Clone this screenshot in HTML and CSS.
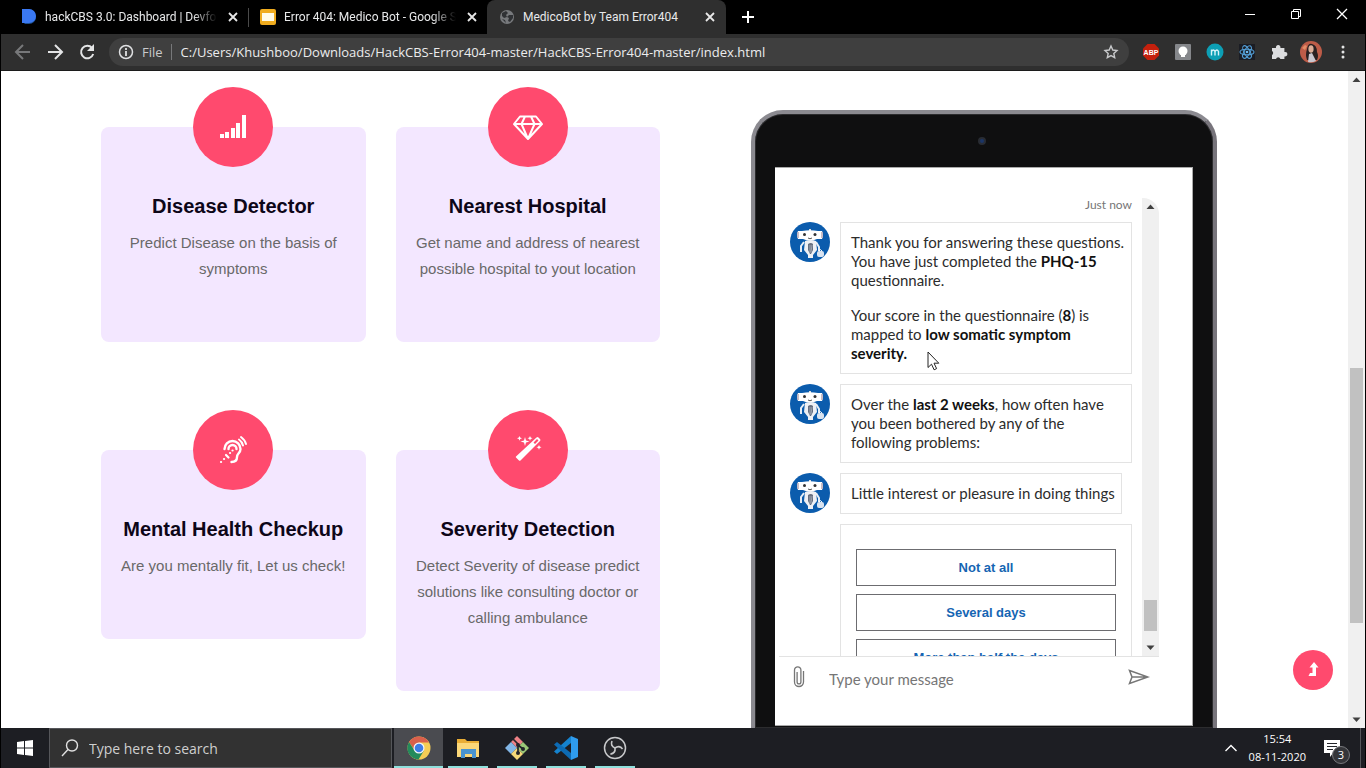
FILE: index.html
```html
<!DOCTYPE html>
<html lang="en">
<head>
<meta charset="utf-8">
<title>MedicoBot by Team Error404</title>
<link rel="stylesheet" href="styles.css">
</head>
<body>
<svg class="defs" width="0" height="0" aria-hidden="true">
  <symbol id="close" viewBox="0 0 16 16"><path d="M4 4l8 8M12 4l-8 8" stroke="#e8e8e8" stroke-width="1.800"/></symbol>
  <symbol id="bot" viewBox="0 0 40 40">
    <circle cx="20" cy="20" r="20" fill="#0b5cad"/>
    <path d="M19 7h2v3h-2z" fill="#ddd"/>
    <path d="M12 9q8-1.500 16 0l4 0q2 4 0 8l-5 0q-7 3-14 0l-5 0q-2-4 0-8z" fill="#fff"/>
    <circle cx="14.500" cy="12.500" r="1.500" fill="#333"/><circle cx="25" cy="12.500" r="1.500" fill="#333"/>
    <path d="M18 16q2 1.500 4 0" stroke="#555" fill="none"/>
    <path d="M8 10v6M32 10v6" stroke="#b9a9b5" stroke-width="1.500"/>
    <path d="M14 20l-3 4v6M26 20l3 5v4" stroke="#e6edf5" stroke-width="2" fill="none"/>
    <path d="M15 19q6-2 11 0l1 9-4 5v3h-5v-3l-4-5z" fill="#eef0f4"/>
    <path d="M18 22q3-2 5 0v6l-2 4h-1l-2-4z" fill="#666f80"/>
    <path d="M20 23v8M22 23l-1 7" stroke="#bcc3cf" stroke-width=".6"/>
    <rect x="27" y="29" width="7" height="6" rx="2" fill="#d9e3f0"/><path d="M29 29q1-3 3 0" fill="none" stroke="#fff"/>
  </symbol>
</svg>

<header class="titlebar">
  <div class="tab">
    <svg width="16" height="16"><path d="M1 0h7a8 8 0 0 1 7 8a7 7 0 0 1-7 7H4l-3-3z" fill="#1d4f8f"/><path d="M1 0h7a7 7 0 0 1 0 14H1z" fill="#3a78f2"/></svg>
    <span class="tab-title fade">hackCBS 3.0: Dashboard | Devfolio</span>
    <button class="plain" aria-label="Close tab"><svg width="16" height="16"><use href="#close"/></svg></button>
  </div>
  <div class="tab divided">
    <svg width="16" height="16"><rect width="16" height="16" rx="2" fill="#f0ac1e"/><rect x="2" y="4" width="12" height="8" fill="#fffbe8"/></svg>
    <span class="tab-title fade">Error 404: Medico Bot - Google Slides</span>
    <button class="plain" aria-label="Close tab"><svg width="16" height="16"><use href="#close"/></svg></button>
  </div>
  <div class="tab active">
    <svg width="16" height="16"><circle cx="8" cy="8" r="7" fill="#77797c"/><path d="M3 4l4-2 2 2-2 2 1 2-3 1-2-2zM10 6l4 0v3l-3 4-2-1 1-3-2-1zM3 10l3 1 1 3z" fill="#303235"/></svg>
    <span class="tab-title">MedicoBot by Team Error404</span>
    <button class="plain" aria-label="Close tab"><svg width="16" height="16"><use href="#close"/></svg></button>
  </div>
  <button class="plain new-tab" aria-label="New tab"><svg width="16" height="16"><path d="M8 2v12M2 8h12" stroke="#fff" stroke-width="2"/></svg></button>
  <div class="window-controls">
    <button class="plain" aria-label="Minimize"><svg width="12" height="12"><path d="M1 6.500h10" stroke="#fff"/></svg></button>
    <button class="plain" aria-label="Restore"><svg width="12" height="12" fill="none" stroke="#fff"><path d="M1.500 3.500h7v7h-7zM3.500 3.500v-2h7v7h-2"/></svg></button>
    <button class="plain" aria-label="Close"><svg width="12" height="12"><path d="M1 1l10 10M11 1L1 11" stroke="#fff" stroke-width="1.300"/></svg></button>
  </div>
</header>

<nav class="toolbar" aria-label="Browser">
  <button class="plain nav-btn" aria-label="Back"><svg width="18" height="18" fill="none" stroke="#77787a" stroke-width="2"><path d="M16 9H3M9 2L2 9l7 7"/></svg></button>
  <button class="plain nav-btn" aria-label="Forward"><svg width="18" height="18" fill="none" stroke="#e4e5e6" stroke-width="2"><path d="M2 9h13M9 2l7 7-7 7"/></svg></button>
  <button class="plain nav-btn" aria-label="Reload"><svg width="18" height="18"><path d="M14 5a6.200 6.200 0 1 0 1.200 6" fill="none" stroke="#e4e5e6" stroke-width="2"/><path d="M16 1v7H9z" fill="#e4e5e6"/></svg></button>
  <div class="omnibox">
    <svg width="16" height="16"><circle cx="8" cy="8" r="6.500" fill="none" stroke="#dfe0e2" stroke-width="1.500"/><path d="M8 7v5M8 4v2" stroke="#dfe0e2" stroke-width="1.800"/></svg>
    <label for="url">File</label>
    <input id="url" type="text" value="C:/Users/Khushboo/Downloads/HackCBS-Error404-master/HackCBS-Error404-master/index.html">
    <button class="plain" aria-label="Bookmark"><svg width="16" height="16"><path d="M8 2l1.800 4 4.200.5-3.200 2.900.9 4.300L8 11.600l-3.700 2.100.9-4.300L2 6.500 6.200 6z" fill="none" stroke="#c8c9cb" stroke-width="1.400"/></svg></button>
  </div>
  <button class="plain ext" aria-label="Adblock Plus"><svg width="18" height="18"><path d="M5.500 1h7L17 5.500v7L12.500 17h-7L1 12.500v-7z" fill="#c4200d"/><text x="9" y="12" text-anchor="middle" class="abp">ABP</text></svg></button>
  <button class="plain ext" aria-label="Notes"><svg width="18" height="18"><rect x="1" y="1" width="16" height="16" rx="1" fill="#85878b"/><circle cx="9" cy="8" r="4.500" fill="#fff"/><path d="M7 11h4v3H7z" fill="#fff"/></svg></button>
  <button class="plain ext" aria-label="M extension"><svg width="18" height="18"><circle cx="9" cy="9" r="8.500" fill="#0d9fb5"/><path d="M5.500 12.500v-6M5.500 8.500q2-3 3.500 0v4M9 8.500q2-3 3.500 0v4" fill="none" stroke="#d8f4fa" stroke-width="1.400"/></svg></button>
  <button class="plain ext" aria-label="React tools"><svg width="18" height="18"><rect x="1" y="1" width="16" height="16" fill="#1b1d24"/><g fill="none" stroke="#539fd6" stroke-width="1.100"><ellipse cx="9" cy="9" rx="7" ry="2.800"/><ellipse cx="9" cy="9" rx="7" ry="2.800" transform="rotate(60 9 9)"/><ellipse cx="9" cy="9" rx="7" ry="2.800" transform="rotate(120 9 9)"/></g><circle cx="9" cy="9" r="1.300" fill="#6cb8ee"/></svg></button>
  <button class="plain ext" aria-label="Extensions"><svg width="18" height="18"><path d="M2 5h4a2.300 2.300 0 1 1 4.400 0h4v4a2.300 2.300 0 1 1 0 4.400V16h-4a2.300 2.300 0 0 0-4.400 0H2v-4a2.300 2.300 0 0 0 0-4z" fill="#dcdddf"/></svg></button>
  <button class="plain ext" aria-label="Profile"><svg width="22" height="22"><circle cx="11" cy="11" r="11" fill="#bd5c48"/><path d="M7 19q-2-5 0-11 1-6 5-5 5 1 5 8 2 4 0 8z" fill="#292021"/><ellipse cx="11" cy="8" rx="2.600" ry="3.800" fill="#dcae98"/><path d="M8 21l1-8 3-1 4 8q-4 2-8 1z" fill="#c9c7cf"/><path d="M2 7l3-3 2 1-2 4z" fill="#e38c66"/></svg></button>
  <button class="plain ext" aria-label="Menu"><svg width="18" height="18" fill="#e4e5e6"><circle cx="9" cy="4" r="1.500"/><circle cx="9" cy="9" r="1.500"/><circle cx="9" cy="14" r="1.500"/></svg></button>
</nav>

<div class="viewport">
  <main class="page">
    <section class="features">
      <article class="card">
        <span class="card-icon"><svg width="40" height="40" fill="#fff"><path d="M7 27h4v4H7zM12 25h4v6h-4zM18 21h4v10h-4zM23 16h4v15h-4zM29 8h4v23h-4z"/></svg></span>
        <h3>Disease Detector</h3>
        <p>Predict Disease on the basis of symptoms</p>
      </article>
      <article class="card">
        <span class="card-icon"><svg width="40" height="40" fill="none" stroke="#fff" stroke-width="2" stroke-linejoin="round"><path d="M12 9.500h16l6 7.500L20 32 6 17zM6 17h28M17 9.500l-3.500 7.500L20 32l6.500-15L23 9.500"/></svg></span>
        <h3>Nearest Hospital</h3>
        <p>Get name and address of nearest possible hospital to yout location</p>
      </article>
      <article class="card">
        <span class="card-icon"><svg width="40" height="40" fill="none" stroke="#fff" stroke-linecap="round" stroke-width="2.400"><path d="M11.500 19a8 8 0 0 1 16 0c0 4-3.500 4.500-3.500 8s-2.500 5-5.500 5M15.500 19a4 4 0 0 1 8 0"/><path d="M26 9.500q3 2 4 6M28 7q4 3 5 7" stroke-width="2"/><path d="M8 32h.1M11 29h.1M19.500 20.500h.1M17 23h.1M13 25l2.500 2.500" stroke-width="2.200"/></svg></span>
        <h3>Mental Health Checkup</h3>
        <p>Are you mentally fit, Let us check!</p>
      </article>
      <article class="card">
        <span class="card-icon"><svg width="40" height="40" fill="#fff"><path fill-rule="evenodd" d="M8 26.500L28.500 7.500q1-1 2 0l1.500 1.500q1 1 0 2L12.500 30.500q-1 .5-1.500 0L8 27.500q-.5-.5 0-1zM25.500 12.500l1.500 1.500 3.500-3.500L29 9z"/><path d="M17 7l1 3.500 3.500 1-3.500 1-1 3.500-1-3.500-3.500-1 3.500-1zM11.500 6l.7 1.600 1.800.7-1.800.7-.7 1.700-.7-1.700L9 8.300l1.800-.7zM22 6l.7 1.600 1.800.7-1.800.7-.7 1.700-.7-1.700-1.800-.7 1.800-.7zM31 15l.7 1.600 1.800.7-1.800.7-.7 1.700-.7-1.700-1.800-.7 1.800-.7z"/></svg></span>
        <h3>Severity Detection</h3>
        <p>Detect Severity of disease predict solutions like consulting doctor or calling ambulance</p>
      </article>
    </section>

    <section class="tablet">
      <div class="camera-row"><span class="camera"></span></div>
      <div class="screen">
        <div class="chat">
          <div class="transcript">
            <div class="messages">
              <p class="stamp">Just now</p>
              <div class="message">
                <svg class="avatar"><use href="#bot"/></svg>
                <div class="bubble">
                  <p>Thank you for answering these questions. You have just completed the <b>PHQ-15</b> questionnaire.</p>
                  <p>Your score in the questionnaire (<b>8</b>) is mapped to <b>low somatic symptom severity.</b></p>
                  <svg class="cursor" width="14" height="20"><path d="M1 1v15.500l3.500-3.300 2.600 5.600 2.500-1.200L7 12.200h4.800z" fill="#fff" stroke="#222"/></svg>
                </div>
              </div>
              <div class="message">
                <svg class="avatar"><use href="#bot"/></svg>
                <div class="bubble"><p>Over the <b>last 2 weeks</b>, how often have you been bothered by any of the following problems:</p></div>
              </div>
              <div class="message">
                <svg class="avatar"><use href="#bot"/></svg>
                <div class="bubble fit"><p>Little interest or pleasure in doing things</p></div>
              </div>
              <div class="message">
                <span class="avatar"></span>
                <div class="bubble choices">
                  <button>Not at all</button>
                  <button>Several days</button>
                  <button>More than half the days</button>
                </div>
              </div>
            </div>
            <div class="scrollbar chat-scroll">
              <svg class="arrow" viewBox="0 0 17 17"><path d="M4.500 11h8l-4-4.500z"/></svg>
              <span class="before"></span><span class="thumb"></span><span class="after"></span>
              <svg class="arrow" viewBox="0 0 17 17"><path d="M4.500 6.500h8l-4 4.500z"/></svg>
            </div>
          </div>
          <form class="composer">
            <button type="button" class="plain" aria-label="Attach"><svg width="16" height="24" fill="none" stroke="#767676" stroke-width="1.300"><path d="M12.500 6v11a4.500 4.500 0 0 1-9 0V5a3.200 3.200 0 0 1 6.400 0v12a1.900 1.900 0 0 1-3.800 0V7"/></svg></button>
            <input type="text" placeholder="Type your message" aria-label="Type your message">
            <button type="button" class="plain" aria-label="Send"><svg width="22" height="16" fill="none" stroke="#767676" stroke-width="1.500"><path d="M1.500 1.500L20 8 1.500 14.500 4 8zM4 8h16"/></svg></button>
          </form>
        </div>
      </div>
    </section>
  </main>
  <button class="to-top" aria-label="Back to top"><svg width="20" height="20"><path d="M11 2l4.500 5.500H13V16H5.500l1.500-3h2.500V7.500H6.500z" fill="#fff"/></svg></button>
  <div class="scrollbar page-scroll">
    <svg class="arrow" viewBox="0 0 17 17"><path d="M4.500 11h8l-4-4.500z"/></svg>
    <span class="before"></span><span class="thumb"></span><span class="after"></span>
    <svg class="arrow" viewBox="0 0 17 17"><path d="M4.500 6.500h8l-4 4.500z"/></svg>
  </div>
</div>

<footer class="taskbar">
  <button class="plain start" aria-label="Start"><svg width="16" height="16" fill="#fff"><path d="M0 2l7-1v6.500H0zM8 1l8-1v7.500H8zM0 8.500h7V15l-7-1zM8 8.500h8V16l-8-1z"/></svg></button>
  <div class="search">
    <svg width="18" height="18" fill="none" stroke="#e0e0e0" stroke-width="1.400"><circle cx="11" cy="6.500" r="5.500"/><path d="M7 10.500L1 17"/></svg>
    <input type="text" placeholder="Type here to search" aria-label="Type here to search">
  </div>
  <div class="apps">
    <button class="plain app current" aria-label="Chrome"><svg width="24" height="24"><circle cx="12" cy="12" r="11.500" fill="#f4cd55"/><path d="M2 6a11.500 11.500 0 0 1 20 0.500H12L7.500 14z" fill="#d9604c"/><path d="M2 6a11.500 11.500 0 0 0 9.500 17.500L17 14.500l-9.500 0z" fill="#248a5c"/><circle cx="12" cy="12" r="5.500" fill="#f4f6fa"/><circle cx="12" cy="12" r="4.300" fill="#3e7de8"/></svg></button>
    <button class="plain app" aria-label="File Explorer"><svg width="24" height="24"><path d="M1 3h8l2 2h12v16H1z" fill="#e9ad35"/><path d="M1 7h22v14H1z" fill="#fbd779"/><path d="M5 13h15v9h-4v-4H9v4H5z" fill="#4993cf"/></svg></button>
    <button class="plain app" aria-label="Git Bash"><svg width="24" height="24"><path d="M12 0l6 6-6 6-6-6z" fill="#ee8186"/><path d="M6 6l6 6-6 6-6-6z" fill="#82b6e6"/><path d="M18 6l6 6-6 6-6-6z" fill="#9bc777"/><path d="M12 12l6 6-6 6-6-6z" fill="#f5d878"/><path d="M8 3l5 5v9M13 9l5 4" fill="none" stroke="#23252a" stroke-width="1.700"/><circle cx="13" cy="9" r="2" fill="#23252a"/><circle cx="13" cy="17" r="2" fill="#23252a"/><circle cx="18" cy="13" r="2" fill="#23252a"/></svg></button>
    <button class="plain app" aria-label="Visual Studio Code"><svg width="24" height="24"><path d="M17 0l7 3v18l-7 3z" fill="#2f9ced"/><path d="M17 0v7L3 18l-3-2.500z" fill="#1583cf"/><path d="M17 24v-7L3 6 0 8.500z" fill="#0d6bb4"/></svg></button>
    <button class="plain app" aria-label="OBS"><svg width="24" height="24" fill="none" stroke="#c8c9cb"><circle cx="12" cy="12" r="10.500" stroke-width="1.500" fill="#25262a"/><g stroke-width="1.600"><path d="M12 12q-5-2-3-7"/><path d="M12 12q-5-2-3-7" transform="rotate(120 12 12)"/><path d="M12 12q-5-2-3-7" transform="rotate(240 12 12)"/></g></svg></button>
  </div>
  <div class="tray">
    <button class="plain" aria-label="Hidden icons"><svg width="14" height="10"><path d="M1.500 8L7 2.500 12.500 8" fill="none" stroke="#fff" stroke-width="1.400"/></svg></button>
    <div class="clock"><span>15:54</span><span>08-11-2020</span></div>
    <button class="plain notices" aria-label="3 notifications"><svg width="16" height="17"><path d="M0 0h16v13H9l-3 4v-4H0z" fill="#fff"/><path d="M3 3.500h10M3 6.500h10M3 9.500h6" stroke="#25262b"/></svg><span class="badge">3</span></button>
  </div>
</footer>
</body>
</html>
```

FILE: styles.css
```css
* { box-sizing: border-box; }

body {
  margin: 0;
  height: 100vh;
  display: flex;
  flex-direction: column;
  overflow: hidden;
  background: #fff;
  border: solid #000;
  border-width: 0 1px;
  font-family: "Liberation Sans", Arial, sans-serif;
}

svg { display: block; flex: none; }
.defs { position: absolute; }
p, h3 { margin: 0; }
input, button { font: inherit; }

.plain {
  border: 0;
  padding: 0;
  background: none;
  color: inherit;
  display: flex;
  align-items: center;
  justify-content: center;
  flex: none;
}

/* Browser chrome */
.titlebar {
  flex: none;
  height: 34px;
  padding-left: 8px;
  display: flex;
  align-items: stretch;
  background: #000;
  color: #e8e9ea;
  font-family: Roboto, sans-serif;
  font-size: 12px;
}

.tab {
  width: 239px;
  padding: 0 7px 0 12px;
  display: flex;
  align-items: center;
  gap: 8px;
}
.divided { background: linear-gradient(#4a4a4a, #4a4a4a) 0 8px / 1px 19px no-repeat; }
.active { padding-right: 8px; background: #2f2f2f; border-radius: 8px 8px 0 0; }
.tab-title { flex: 1; min-width: 0; overflow: hidden; white-space: nowrap; }
.fade { mask-image: linear-gradient(to right, #000 86%, transparent); }
.new-tab { width: 44px; }
.window-controls { margin-left: auto; padding-bottom: 6px; display: flex; }
.window-controls .plain { width: 46px; }

.toolbar {
  flex: none;
  height: 37px;
  padding: 0 6px;
  display: flex;
  align-items: center;
  background: #2f2f2f;
  border-bottom: 1px solid #1c1c1c;
  font-family: "Open Sans", sans-serif;
  font-size: 13px;
}
.nav-btn, .ext { width: 32px; height: 28px; }
.omnibox {
  flex: 1;
  min-width: 0;
  height: 28px;
  margin: 0 6px;
  padding: 0 10px 0 9px;
  display: flex;
  align-items: center;
  gap: 8px;
  border-radius: 14px;
  background: #3f3f3f;
  color: #c9cacc;
}
.omnibox input {
  flex: 1;
  min-width: 0;
  height: 16px;
  padding: 0 0 0 9px;
  border: 0;
  border-left: 1px solid #77787a;
  background: none;
  color: #ececed;
}
.abp { font: bold 7px "Liberation Sans", sans-serif; fill: #fff; }

/* Web page */
.viewport { flex: 1; min-height: 0; display: flex; position: relative; }
.page {
  flex: 1;
  min-width: 0;
  overflow: hidden;
  padding: 0 131px 0 100px;
  display: grid;
  grid-template-columns: 559fr 466fr;
  grid-template-rows: 100%;
  gap: 91px;
}
.features {
  padding-top: 56px;
  display: grid;
  grid-template-columns: 1fr 1fr;
  align-content: start;
  align-items: start;
  gap: 108px 30px;
}
.card {
  padding: 0 15px 60px;
  display: flex;
  flex-direction: column;
  align-items: center;
  border-radius: 8px;
  background: #f3e7ff;
  text-align: center;
}
.card-icon {
  width: 80px;
  height: 80px;
  margin-top: -40px;
  display: grid;
  place-items: center;
  border-radius: 50%;
  background: #ff4a6e;
}
.card h3 { margin: 27px 0 12px; color: #0d0618; font-size: 20px; line-height: 24px; }
.card p { color: #696969; font-size: 15px; line-height: 26px; }

.tablet {
  min-width: 0;
  margin-top: 39px;
  padding: 0 20px 2px;
  display: flex;
  flex-direction: column;
  border: 4px solid #8b8a90;
  border-right-color: #77747b;
  border-bottom: 0;
  border-radius: 32px 32px 0 0;
  background: #0f0f10;
  box-shadow: inset 0 0 0 1px #2c2c2e;
}
.camera-row { flex: none; height: 53px; padding-right: 5px; display: grid; place-items: center; }
.camera { width: 8px; height: 8px; border-radius: 50%; border: 2px solid #292c33; background: #1b3568; }
.screen {
  flex: 1;
  min-height: 0;
  padding: 30px 33px 28px 4px;
  border: 1px solid #aaa;
  border-width: 1px 1px 1px 0;
  background: #fff;
}
.chat { height: 100%; display: flex; flex-direction: column; font-family: Lato, sans-serif; }
.transcript { flex: 1; min-height: 0; display: flex; overflow: hidden; border-bottom: 1px solid #e3e3e3; }
.messages {
  flex: 1;
  min-width: 0;
  padding: 0 10px 0 11px;
  display: flex;
  flex-direction: column;
  gap: 10px;
  color: #2c2c2c;
  font-size: 15px;
  line-height: 19px;
}
.stamp { color: #767676; font-size: 12px; line-height: 14px; text-align: right; }
.message { display: flex; align-items: flex-start; gap: 10px; }
.avatar { width: 40px; height: 40px; flex: none; }
.bubble { position: relative; flex: 1; padding: 10px 6px 10px 10px; border: 1px solid #e3e3e3; }
.bubble p + p { margin-top: 16px; }
.bubble b { color: #111; }
.fit { flex: none; }
.cursor { position: absolute; left: 86px; top: 128px; }
.choices { padding: 24px 15px; display: flex; flex-direction: column; gap: 8px; }
.choices button {
  height: 37px;
  padding: 0;
  border: 1px solid #6c6c70;
  background: #fff;
  color: #1565b3;
  font: bold 13px "Liberation Sans", Arial, sans-serif;
}
.composer { flex: none; height: 40px; padding: 0 9px 0 12px; display: flex; align-items: center; gap: 22px; }
.composer input {
  flex: 1;
  min-width: 0;
  padding: 4px 0 0;
  border: 0;
  background: none;
  font-size: 15px;
}
.composer input::placeholder { color: #767676; opacity: 1; }

.scrollbar { width: 17px; flex: none; display: flex; flex-direction: column; align-items: center; background: #f0f0f0; }
.arrow { width: 17px; height: 17px; fill: #404040; }
.thumb { width: 13px; background: #c1c1c1; }
.chat-scroll { border-radius: 0 16px 0 0; }
.chat-scroll .before { flex: 385; }
.chat-scroll .thumb { flex: 31; }
.chat-scroll .after { flex: 8; }
.page-scroll .before { flex: 280; }
.page-scroll .thumb { flex: 255; }
.page-scroll .after { flex: 88; }

.to-top {
  position: absolute;
  right: 32px;
  bottom: 38px;
  width: 40px;
  height: 40px;
  padding: 0;
  display: grid;
  place-items: center;
  border: 0;
  border-radius: 50%;
  background: #ff4a6e;
}

/* Windows taskbar */
.taskbar {
  flex: none;
  height: 40px;
  display: flex;
  background: #1d1e23;
  color: #fff;
  font-family: "Open Sans", sans-serif;
}
.start { width: 48px; }
.search {
  width: 343px;
  padding: 0 11px;
  display: flex;
  align-items: center;
  gap: 10px;
  border: 1px solid #55565a;
  background: #323232;
}
.search input { flex: 1; min-width: 0; padding: 0; border: 0; background: none; font-size: 14px; }
.search input::placeholder { color: #cfcfcf; opacity: 1; }
.apps { margin-left: 2px; display: flex; }
.app { width: 49px; background: linear-gradient(#8fe0dc, #8fe0dc) center bottom / 40px 2px no-repeat; }
.current { background: linear-gradient(#8fe0dc, #8fe0dc) center bottom / 100% 2px no-repeat, #4a4b50; }
.tray { margin: 0 4px 0 auto; padding-right: 11px; display: flex; align-items: center; border-right: 1px solid #55565a; }
.clock {
  margin: 0 13px 0 11px;
  display: flex;
  flex-direction: column;
  align-items: center;
  font-size: 11px;
  line-height: 18px;
}
.notices { position: relative; width: 30px; height: 40px; padding-right: 4px; }
.badge {
  position: absolute;
  left: 13px;
  top: 18px;
  width: 18px;
  height: 18px;
  border: 1px solid #77787c;
  border-radius: 50%;
  background: #35363a;
  font-size: 11px;
  line-height: 16px;
}
```
